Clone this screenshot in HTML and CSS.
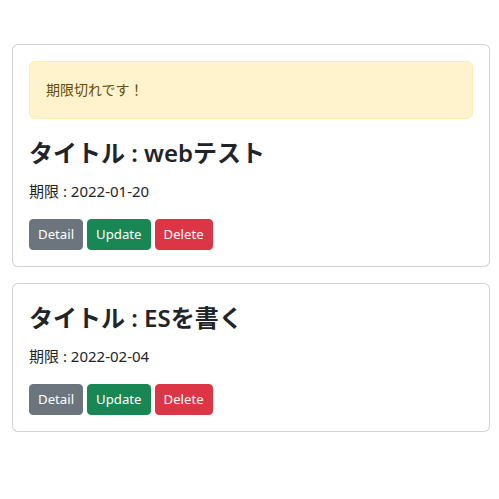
FILE: index.html
```html
<!DOCTYPE html>
<html lang="ja">
<head>
<meta charset="utf-8">
<link rel="stylesheet" href="styles.css">
</head>
<body>
<div class="container">
  <div class="card">
    <div class="card-body">
      <div class="alert">期限切れです！</div>
      <h2 class="card-title">タイトル : webテスト</h2>
      <p class="card-text">期限 : 2022-01-20</p>
      <div class="actions">
        <a class="btn btn-secondary">Detail</a>
        <a class="btn btn-success">Update</a>
        <a class="btn btn-danger">Delete</a>
      </div>
    </div>
  </div>
  <div class="card">
    <div class="card-body">
      <h2 class="card-title">タイトル : ESを書く</h2>
      <p class="card-text">期限 : 2022-02-04</p>
      <div class="actions">
        <a class="btn btn-secondary">Detail</a>
        <a class="btn btn-success">Update</a>
        <a class="btn btn-danger">Delete</a>
      </div>
    </div>
  </div>
</div>
</body>
</html>
```
FILE: styles.css
```css
* { box-sizing: border-box; }
html, body {
  margin: 0;
  background: #fff;
}
body {
  font-family: "Noto Sans", "Noto Sans CJK JP", sans-serif;
  font-size: 16px;
  line-height: 1.5;
  color: #212529;
}
.container {
  padding: 44px 9px 0 12px;
  display: flex;
  flex-direction: column;
  gap: 16px;
}
.card {
  border: 1px solid rgba(0, 0, 0, 0.175);
  border-radius: 6px;
  background: #fff;
}
.card-body {
  padding: 16px;
}
.alert {
  background: #fff3cd;
  border: 1px solid #ffecb5;
  color: #664d03;
  border-radius: 6px;
  padding: 16px;
  margin-bottom: 16px;
  line-height: 24px;
  font-size: 14px;
}
.card-title {
  margin: 0 0 8px;
  font-size: 24px;
  font-weight: 600;
  line-height: 36px;
}
.card-text {
  margin: 0 0 16px;
  font-size: 15px;
  line-height: 24px;
}
.actions {
  display: flex;
  gap: 4px;
}
.btn {
  display: inline-block;
  padding: 4px 8px;
  font-size: 13.2px;
  line-height: 21px;
  border: 1px solid transparent;
  border-radius: 4px;
  color: #fff;
}
.btn-secondary { background: #6c757d; border-color: #6c757d; }
.btn-success { background: #198754; border-color: #198754; }
.btn-danger { background: #dc3545; border-color: #dc3545; }
```
